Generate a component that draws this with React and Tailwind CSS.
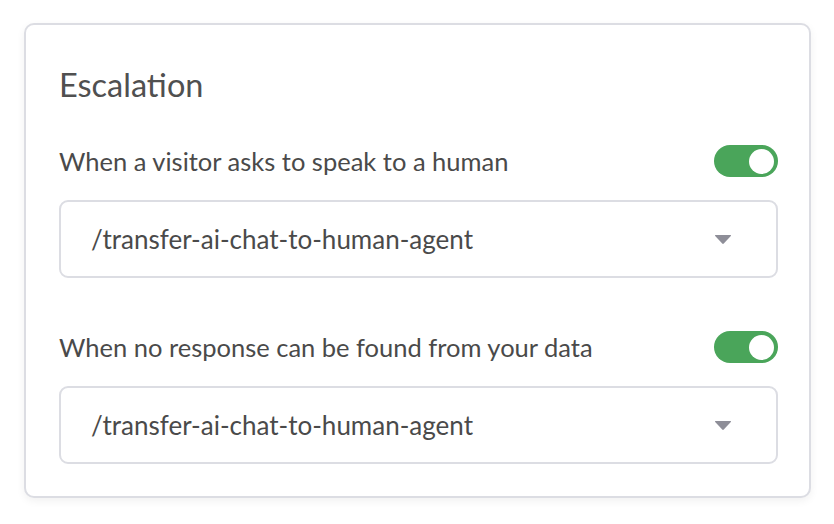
import React, { useState } from "react";

function Toggle({ on, onChange }) {
  return (
    <button
      onClick={() => onChange(!on)}
      className={`flex h-[32px] w-[64px] items-center rounded-full px-[4px] ${
        on ? "justify-end bg-[#4aa55a]" : "justify-start bg-[#cfd2d9]"
      }`}
    >
      <span className="h-[25px] w-[25px] rounded-full bg-white" />
    </button>
  );
}

function Select({ value }) {
  return (
    <div className="flex h-[78px] items-center justify-between rounded-[9px] border-2 border-[#dcdde3] pl-[30px] pr-[44px]">
      <span className="text-[26px] text-[#4a4a4a]">{value}</span>
      <svg width="18" height="11" viewBox="0 0 18 11">
        <path d="M1.5 1 L16.5 1 Q17.5 1 16.8 2 L9.8 9.6 Q9 10.4 8.2 9.6 L1.2 2 Q0.5 1 1.5 1 Z" fill="#8e8e98" />
      </svg>
    </div>
  );
}

export default function App() {
  const [human, setHuman] = useState(true);
  const [noResp, setNoResp] = useState(true);

  const rules = [
    { label: "When a visitor asks to speak to a human", on: human, set: setHuman },
    { label: "When no response can be found from your data", on: noResp, set: setNoResp },
  ];

  return (
    <div className="min-h-screen bg-white pl-[24px] pt-[23px] font-['Lato',sans-serif]">
      <div className="flex w-[787px] flex-col rounded-[10px] border-2 border-[#dcdde3] bg-white pl-[33px] pr-[31px] pt-[40px] pb-[32px] shadow-[0_3px_8px_rgba(0,0,0,0.06)]">
        <h2 className="text-[32.5px] leading-[40px] text-[#505050]">Escalation</h2>
        <div className="mt-[39px] flex flex-col gap-[52px]">
          {rules.map((r) => (
            <div key={r.label} className="flex flex-col">
              <div className="flex h-[34px] items-center justify-between">
                <span className="text-[25.5px] text-[#4a4a4a]">{r.label}</span>
                <Toggle on={r.on} onChange={r.set} />
              </div>
              <div className="mt-[22px]">
                <Select value="/transfer-ai-chat-to-human-agent" />
              </div>
            </div>
          ))}
        </div>
      </div>
    </div>
  );
}
